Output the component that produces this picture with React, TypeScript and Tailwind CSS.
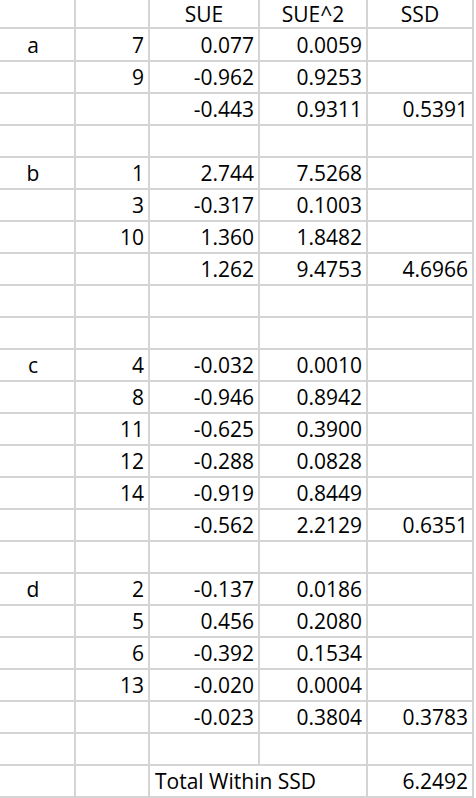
import React from 'react';

type Row = [string, string, string, string, string];

const header: Row = ['', '', 'SUE', 'SUE^2', 'SSD'];

const blank: Row = ['', '', '', '', ''];

const rows: Row[] = [
  ['a', '7', '0.077', '0.0059', ''],
  ['', '9', '-0.962', '0.9253', ''],
  ['', '', '-0.443', '0.9311', '0.5391'],
  blank,
  ['b', '1', '2.744', '7.5268', ''],
  ['', '3', '-0.317', '0.1003', ''],
  ['', '10', '1.360', '1.8482', ''],
  ['', '', '1.262', '9.4753', '4.6966'],
  blank,
  blank,
  ['c', '4', '-0.032', '0.0010', ''],
  ['', '8', '-0.946', '0.8942', ''],
  ['', '11', '-0.625', '0.3900', ''],
  ['', '12', '-0.288', '0.0828', ''],
  ['', '14', '-0.919', '0.8449', ''],
  ['', '', '-0.562', '2.2129', '0.6351'],
  blank,
  ['d', '2', '-0.137', '0.0186', ''],
  ['', '5', '0.456', '0.2080', ''],
  ['', '6', '-0.392', '0.1534', ''],
  ['', '13', '-0.020', '0.0004', ''],
  ['', '', '-0.023', '0.3804', '0.3783'],
  blank,
];

const cell = 'flex items-center border-r-2 border-b-2 border-[#d4d4d4] overflow-hidden whitespace-nowrap';

const App: React.FC = () => {
  return (
    <div className="w-[476px] h-[798px] bg-white overflow-hidden text-[21px] leading-[28px] text-black" style={{ fontFamily: '"Open Sans", sans-serif' }}>
      <div className="grid w-[474px] grid-cols-[76px_74px_110px_108px_106px] grid-rows-[29px_33px] auto-rows-[32px]">
        {/* header row */}
        {header.map((h, i) => (
          <div key={'h' + i} className={`${cell} justify-center`}>
            {h}
          </div>
        ))}

        {rows.map((r, ri) => (
          <React.Fragment key={ri}>
            <div className={`${cell} justify-center pr-[8px]`}>{r[0]}</div>
            <div className={`${cell} justify-end pr-[4px]`}>{r[1]}</div>
            <div className={`${cell} justify-end pr-[4px]`}>{r[2]}</div>
            <div className={`${cell} justify-end pr-[4px]`}>{r[3]}</div>
            <div className={`${cell} justify-end pr-[4px]`}>{r[4]}</div>
          </React.Fragment>
        ))}

        {/* total row, label spills over into next column */}
        <div className={cell}></div>
        <div className={cell}></div>
        <div className="flex items-center border-b-2 border-[#d4d4d4] whitespace-nowrap pl-[5px] overflow-visible">
          Total Within SSD
        </div>
        <div className={cell}></div>
        <div className={`${cell} justify-end pr-[4px]`}>6.2492</div>
      </div>
    </div>
  );
};

export default App;
